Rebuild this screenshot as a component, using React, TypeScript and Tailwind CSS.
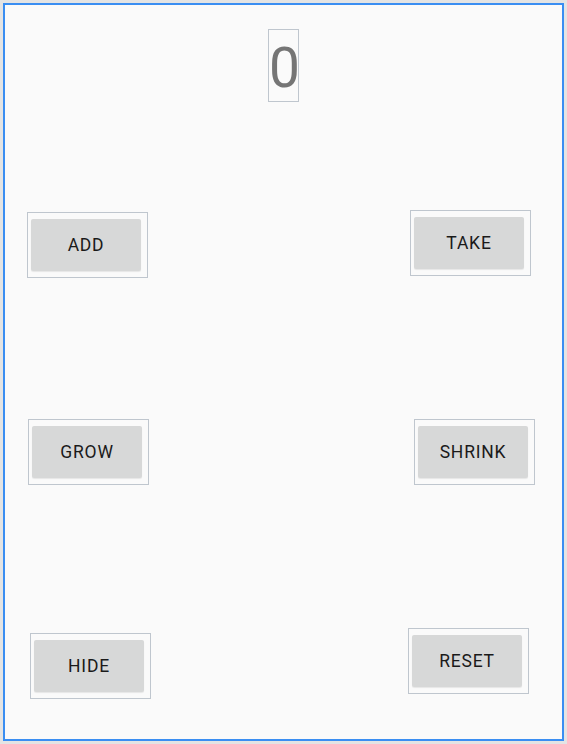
const font = { fontFamily: "Roboto, 'Noto Sans', sans-serif" };

function Btn({ label, className }: { label: string; className?: string }) {
  return (
    <div
      className={`border border-[#bfc6ce] pl-[3px] pr-[6px] py-[6px] ${className ?? ""}`}
    >
      <button className="flex h-[52px] w-[110px] items-center justify-center rounded-[2px] bg-[#d7d8d8] pt-[1px] text-[17.5px] font-normal tracking-[0.045em] text-[#1a1a1a] shadow-[0_1px_1px_rgba(0,0,0,0.08)]">
        {label}
      </button>
    </div>
  );
}

export default function App() {
  return (
    <div className="h-[744px] w-[567px] bg-[#e4e4e4] p-[3px]" style={font}>
      <div className="flex h-full flex-col border-2 border-[#3a8ef2] bg-[#fafafa]">
        <div className="mx-auto mt-[24px] h-[73px] w-[31px] border border-[#bfc6ce] pt-[6px] pb-[1px] text-center text-[55px] leading-[64px] text-[#757575]">
          0
        </div>

        <div className="mt-[108px] flex items-start justify-between">
          <Btn label="ADD" className="ml-[22px] mt-[2px]" />
          <Btn label="TAKE" className="mr-[31px]" />
        </div>

        <div className="mt-[141px] flex items-start justify-between">
          <Btn label="GROW" className="ml-[23px]" />
          <Btn label="SHRINK" className="mr-[27px]" />
        </div>

        <div className="mt-[143px] flex items-start justify-between">
          <Btn label="HIDE" className="ml-[25px] mt-[5px]" />
          <Btn label="RESET" className="mr-[33px]" />
        </div>
      </div>
    </div>
  );
}
